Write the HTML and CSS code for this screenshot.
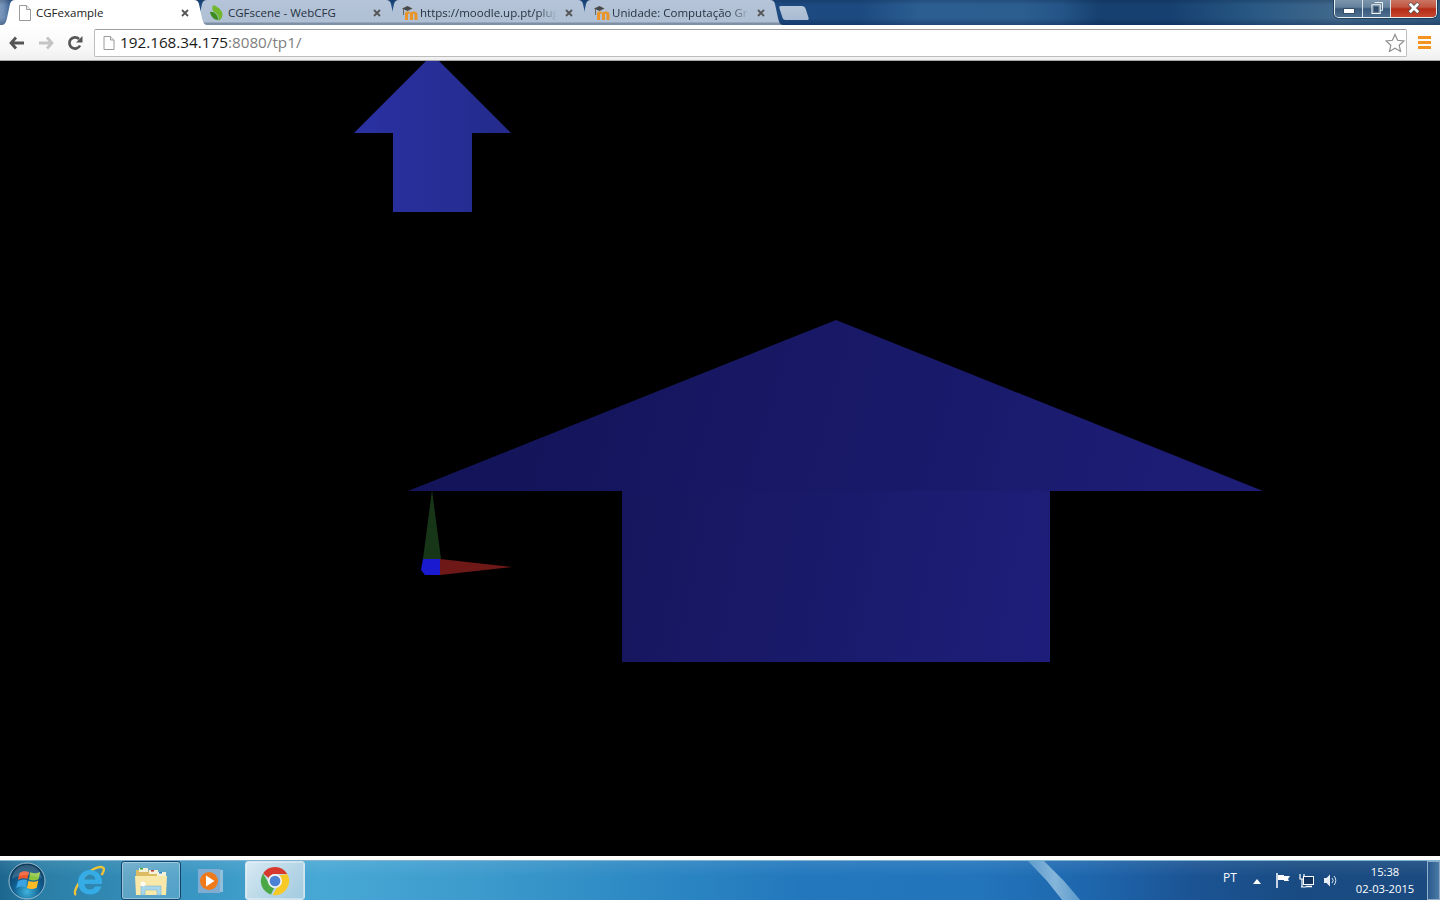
FILE: index.html
```html
<!DOCTYPE html>
<html lang="pt">
<head>
<meta charset="utf-8">
<title>CGFexample</title>
<link rel="stylesheet" href="styles.css">
</head>
<body>
<header class="chrome">
  <div class="tabstrip">
    <div class="tabs">
      <div class="tab active">
        <svg class="favicon" viewBox="0 0 14 16"><path d="M1.5.5h7l4 4v11h-11z" fill="#fff" stroke="#9a9a9a"/><path d="M8.5.5v4h4" fill="#eee" stroke="#9a9a9a"/></svg>
        <span class="tab-title">CGFexample</span>
        <svg class="tab-close" viewBox="0 0 8 8"><path d="M1 1l6 6M7 1L1 7" stroke="#555" stroke-width="1.8"/></svg>
      </div>
      <div class="tab">
        <svg class="favicon" viewBox="0 0 14 16"><path d="M3.500 0C9.500 2.500 13 6.500 12.500 10.500 12 13 10.500 15 8.500 16 9.500 12 7.500 9 3 6 1.800 4 2 2 3.500 0z" fill="#72b82e"/><path d="M0 7c3.500-1 7.500 2 8.500 8C4 15 .8 11.500 0 7z" fill="#3c8c20"/></svg>
        <span class="tab-title">CGFscene - WebCFG</span>
        <svg class="tab-close" viewBox="0 0 8 8"><path d="M1 1l6 6M7 1L1 7" stroke="#555" stroke-width="1.8"/></svg>
      </div>
      <div class="tab">
        <svg class="favicon moodle" viewBox="0 0 16 16"><use href="#moodle"/></svg>
        <span class="tab-title fade">https://moodle.up.pt/plug</span>
        <svg class="tab-close" viewBox="0 0 8 8"><path d="M1 1l6 6M7 1L1 7" stroke="#555" stroke-width="1.8"/></svg>
      </div>
      <div class="tab">
        <svg class="favicon moodle" viewBox="0 0 16 16"><use href="#moodle"/></svg>
        <span class="tab-title fade">Unidade: Computação Gr</span>
        <svg class="tab-close" viewBox="0 0 8 8"><path d="M1 1l6 6M7 1L1 7" stroke="#555" stroke-width="1.8"/></svg>
      </div>
      <div class="newtab"></div>
    </div>
    <div class="winctl">
      <div class="wbtn wmin"><span class="minbar"></span></div>
      <div class="wbtn wmax">
        <svg viewBox="0 0 13 13" class="maxicon"><path d="M4 .5h8.500V9H10" fill="none" stroke="#fff"/><rect x="1" y="3" width="9" height="9.500" fill="#5f7d99" stroke="#fff"/><rect x="3.500" y="5.500" width="4" height="4.500" fill="#35506c" stroke="#1e3650" stroke-width=".6"/></svg>
      </div>
      <div class="wbtn wclose">
        <svg viewBox="0 0 14 12" class="closeicon"><path d="M2.500 1.500l9 9M11.500 1.500l-9 9" stroke="#46505a" stroke-width="4.200"/><path d="M2.800 1.800l8.400 8.400M11.200 1.800l-8.400 8.400" stroke="#fff" stroke-width="2.800"/></svg>
      </div>
    </div>
  </div>
  <nav class="toolbar">
    <svg class="navicon back" viewBox="0 0 16 14"><path d="M7 1.500L2 7l5 5.500M2.500 7H15" fill="none" stroke="#555" stroke-width="2.800"/></svg>
    <svg class="navicon fwd" viewBox="0 0 16 14"><path d="M9 1.500L14 7l-5 5.500M13.500 7H1" fill="none" stroke="#c4c4c4" stroke-width="2.800"/></svg>
    <svg class="navicon reload" viewBox="0 0 16 16"><path d="M13 10.500A5.600 5.600 0 1 1 12 4" fill="none" stroke="#555" stroke-width="2.700"/><path d="M9 7.500h6.500V1z" fill="#555"/></svg>
    <div class="omnibox">
      <svg class="pageicon" viewBox="0 0 12 14"><path d="M1 .5h6.500l3.500 3.500v9.500H1z" fill="#fff" stroke="#9a9a9a"/><path d="M7.500.5V4H11" fill="#eee" stroke="#9a9a9a"/></svg>
      <span class="url"><span class="host">192.168.34.175</span>:8080/tp1/</span>
      <svg class="star" viewBox="0 0 20 20"><path d="M10 1.500l2.600 5.800 6.300.7-4.700 4.200 1.300 6.200L10 15.200 4.500 18.400l1.300-6.200L1.100 8l6.300-.7z" fill="#fff" stroke="#8e8e8e" stroke-width="1.200"/></svg>
    </div>
    <div class="menu"><span></span><span></span><span></span></div>
  </nav>
</header>

<main class="stage">
  <svg class="scene" viewBox="0 61 1440 795" preserveAspectRatio="none">
    <defs>
      <linearGradient id="arrowfill" x1="0" y1="0" x2="1" y2="0"><stop offset="0" stop-color="#2a31a2"/><stop offset="1" stop-color="#242b8c"/></linearGradient>
      <linearGradient id="roof" gradientUnits="userSpaceOnUse" x1="520" y1="340" x2="1180" y2="520"><stop offset="0" stop-color="#14145a"/><stop offset="1" stop-color="#1d1d76"/></linearGradient>
      <linearGradient id="body" gradientUnits="userSpaceOnUse" x1="622" y1="540" x2="1050" y2="620"><stop offset="0" stop-color="#16165e"/><stop offset="1" stop-color="#1e1e7a"/></linearGradient>
    </defs>
    <polygon fill="url(#arrowfill)" points="354,133 426,61 439,61 511,133 472,133 472,212 393,212 393,133"/>
    <polygon fill="url(#roof)" points="408,491 836,320 1263,491"/>
    <rect fill="url(#body)" x="622" y="491" width="428" height="171"/>
    <polygon fill="#173517" points="432,490 441,559 423,559"/>
    <polygon fill="#1a1ad0" points="423,559 440,559 440,575 425,575 421,570"/>
    <polygon fill="#6e1818" points="440,559 512,567 440,575"/>
  </svg>
</main>

<footer class="taskbar-wrap">
  <div class="taskbar">
    <svg class="orb" viewBox="0 0 38 38">
      <defs>
        <radialGradient id="orbfill" cx=".5" cy=".8" r=".75"><stop offset="0" stop-color="#3fb4dc"/><stop offset=".5" stop-color="#105f92"/><stop offset="1" stop-color="#0b3a5c"/></radialGradient>
      </defs>
      <circle cx="19" cy="19" r="18" fill="url(#orbfill)" stroke="#9dbbcc" stroke-width="1"/>
      <g transform="translate(3.500 -1)">
        <path d="M8 12c3-2 6-2.500 9.500-1l-1.600 7c-3-1.300-6-1-9.500.8z" fill="#f0562a"/>
        <path d="M18.800 11.200c3.500 1.500 6.500 1.500 10-.4l-1.700 7.400c-3.300 1.800-6.300 1.800-9.700.4z" fill="#8cc63f"/>
        <path d="M6.500 20c3.300-1.700 6.300-2 9.200-.8l-1.600 7c-3-1.300-6-1-9.400.7z" fill="#3aa3e3"/>
        <path d="M17 19.700c3.400 1.400 6.500 1.400 9.800-.3l-1.600 7.300c-3.400 1.700-6.500 1.700-9.800.3z" fill="#fbbb27"/>
      </g>
      <path d="M4 17C5 8 11 3 19 3s14 5 15 14c-5-3-10-4-15-4S9 14 4 17z" fill="#fff" opacity=".16"/>
    </svg>
    <div class="slot">
      <svg class="ie" viewBox="0 0 32 32">
        <path d="M3 30C-1 27 8 12 19 5c5-3 10-4 11.500-2 1 1.500 0 4-2 7" fill="none" stroke="#f0c238" stroke-width="2.400"/>
        <path d="M29 19H11.500c.3 3.500 2.500 5.500 5.500 5.500 2.500 0 4-1 5-3h6.500c-1.500 5-5.800 8-11.500 8-7 0-12-5-12-12S10 5 17 5s12 5 12 12zM11.500 14.500h11c-.3-3-2.500-5-5.500-5s-5.200 2-5.500 5z" fill="#35ace6" fill-rule="evenodd"/>
      </svg>
    </div>
    <div class="slot open">
      <svg class="folder" viewBox="0 0 34 30">
        <path d="M2 4h12l2 3h16v21H2z" fill="#dcbc62"/>
        <rect x="5" y="2" width="9" height="4" fill="#f4f0d8"/><rect x="6" y="2" width="3" height="1.500" fill="#3aa83a"/>
        <rect x="15" y="4" width="9" height="4" fill="#f4f0d8"/><rect x="17" y="4" width="3" height="1.500" fill="#c0392b"/>
        <rect x="23" y="6" width="9" height="4" fill="#f4f0d8"/><rect x="25" y="6" width="3" height="1.500" fill="#2a80c8"/>
        <path d="M1 10h32l-1 19H2z" fill="#f8e8aa"/>
        <path d="M7 29v-9h20v9h-4v-5H11v5z" fill="#a9d7ea" stroke="#7fb8d4" stroke-width=".6"/>
        <circle cx="9" cy="18" r="2.500" fill="#fff" opacity=".85"/>
      </svg>
    </div>
    <div class="slot">
      <svg class="media" viewBox="0 0 28 26">
        <rect x="6" y="2" width="20" height="22" fill="#b6cfe4" opacity=".7"/>
        <rect x="1" y="1" width="22" height="24" fill="#7facd0"/>
        <circle cx="12" cy="13" r="9" fill="#ee7a1c"/>
        <path d="M9 7.500l8.500 5.500L9 18.500z" fill="#fff"/>
      </svg>
    </div>
    <div class="slot open active-app">
      <svg class="chromelogo" viewBox="0 0 32 32">
        <path d="M16 1a15 15 0 0 1 13 7.500H16a7.500 7.500 0 0 0-6.800 4.300L3.300 7.900A15 15 0 0 1 16 1z" fill="#d8392e"/>
        <path d="M3.300 7.900l6.300 10.900A7.500 7.500 0 0 0 15 23.400L11.700 30.400A15 15 0 0 1 3.300 7.900z" fill="#4aa846"/>
        <path d="M29 8.500a15 15 0 0 1-15.500 22.300l6.200-10.900A7.500 7.500 0 0 0 20.500 10z" fill="#f6c925"/>
        <circle cx="16" cy="16" r="7.500" fill="#f2f2f2"/>
        <circle cx="16" cy="16" r="5.700" fill="#4c82d4"/>
      </svg>
    </div>
    <div class="tray">
      <span class="lang">PT</span>
      <svg class="t-up" viewBox="0 0 8 5"><path d="M4 0l4 5H0z" fill="#fff"/></svg>
      <svg class="t-flag" viewBox="0 0 14 15"><path d="M1 0v15" stroke="#fff" stroke-width="1.500"/><path d="M2 2h6v1h6l-2 3 1 2H8V7H2z" fill="#fff"/></svg>
      <svg class="t-net" viewBox="0 0 15 15"><path d="M1 1v5h4V1M3 6v8M2 14h5" fill="none" stroke="#fff" stroke-width="1.200"/><rect x="4.500" y="3.500" width="10" height="8" fill="#12345f" stroke="#fff"/><path d="M7 13.500h6" stroke="#fff" stroke-width="1.500"/></svg>
      <svg class="t-vol" viewBox="0 0 15 15"><path d="M1 5h2.500L7 1.500v12L3.500 10H1z" fill="#e8eef4"/><path d="M9 5a3.500 3.500 0 0 1 0 5M11 3a6.500 6.500 0 0 1 0 9" fill="none" stroke="#dfe8f0" stroke-width="1"/></svg>
      <div class="clock"><span>15:38</span><span>02-03-2015</span></div>
      <div class="showdesk"></div>
    </div>
    <div class="streak"></div>
  </div>
</footer>

<svg class="defs" width="0" height="0">
  <symbol id="moodle" viewBox="0 0 16 16">
    <path d="M3 13.500V7.500C5 6 7 6 8.500 7.500 10.500 6 15.500 5.500 15.500 9.500V15h-3V9.500c0-1.500-1.500-1.500-1.500 0V15H8V9.500C8 8 6 8 6 9.500V15H3z" fill="#e9952a"/>
    <path d="M0 3.500L5.500 1l5 2.500L5.500 6z" fill="#4a4a4a"/>
    <path d="M1.500 4v6" stroke="#666" stroke-width="1"/>
  </symbol>
</svg>
</body>
</html>
```
FILE: styles.css
```css
* { box-sizing: border-box; }
html, body { margin: 0; height: 100%; }
body {
  width: 1440px;
  height: 900px;
  overflow: hidden;
  display: flex;
  flex-direction: column;
  background: #000;
  font-family: "Open Sans", "Noto Sans", sans-serif;
}
.defs { display: block; height: 0; }

/* browser chrome */
.chrome { flex: none; height: 61px; display: flex; flex-direction: column; }
.tabstrip {
  position: relative;
  height: 25px;
  flex: none;
  display: flex;
  background:
    linear-gradient(180deg, rgba(10,30,60,.25) 0, rgba(10,30,60,0) 5px, rgba(10,30,70,0) 18px, rgba(8,30,70,.35) 25px),
    linear-gradient(90deg, #7c97bb 0, #6f8db3 4px, #1f4a80 14px, #1c4a80 860px, #2c5e92 920px, #2c5e90 1020px, #255588 1060px, #16406f 1100px, #164070 1170px, #2a5a85 1260px, #42688c 1340px, #2f5a80 1440px);
}
.tabs { display: flex; align-items: flex-start; padding-left: 2px; }
.tab {
  position: relative;
  width: 205px;
  height: 25px;
  margin-right: -13px;
  padding: 0 0 0 16px;
  display: flex;
  align-items: center;
  clip-path: path("M0 25C3 25 4 22 5 18L8 4C9 1 10 0 13 0L192 0C195 0 196 1 197 4L200 18C201 22 202 25 205 25Z");
  background: linear-gradient(180deg, #b5c4d8 0, #afbfd4 22px, #7e90a6 23px, #7e90a6 25px);
  font-size: 11.5px;
  color: #26323f;
}
.tab.active {
  z-index: 5;
  background: #fff;
  color: #222;
}
.favicon { width: 14px; height: 16px; flex: none; margin-right: 4px; }
.favicon.moodle { width: 16px; margin-right: 2px; }
.tab-title {
  width: 136px;
  flex: none;
  white-space: nowrap;
}
.tab-title.fade {
  -webkit-mask-image: linear-gradient(90deg, #000 118px, transparent 137px);
  mask-image: linear-gradient(90deg, #000 118px, transparent 137px);
}
.tab-close { width: 8px; height: 8px; flex: none; margin-left: 9px; margin-top: 1px; }
.newtab {
  width: 26px;
  height: 14px;
  margin: 6px 0 0 11px;
  border-radius: 2px 3px 2px 2px;
  transform: skewX(18deg);
  background: linear-gradient(180deg, #b6c6da, #a9bbd1);
}
.winctl {
  position: absolute;
  top: -1px;
  right: 3px;
  width: 103px;
  height: 19px;
  display: flex;
  border: 1px solid #e6edf3;
  border-top: 0;
  border-radius: 0 0 5px 5px;
  box-shadow: 0 0 0 1px rgba(20,40,60,.6);
  overflow: hidden;
}
.wbtn { display: flex; align-items: center; justify-content: center; height: 100%; }
.wmin, .wmax {
  width: 28px;
  border-right: 1px solid #d8e2ea;
  background: linear-gradient(180deg, #7f98ae 0, #64819c 45%, #3a5a7a 55%, #4d6f90 100%);
}
.wclose {
  flex: 1;
  background: linear-gradient(180deg, #cc7a6a 0, #c0553f 45%, #b52c16 55%, #c9472f 100%);
}
.minbar { width: 10px; height: 4px; margin-top: 6px; background: #fff; box-shadow: 0 0 0 1px rgba(40,60,80,.5); }
.maxicon { width: 12px; height: 12px; }
.closeicon { width: 14px; height: 12px; }

.toolbar {
  flex: 1;
  display: flex;
  align-items: center;
  padding: 0 0 0 9px;
  background: linear-gradient(180deg, #fff 0, #f7f7f7 70%, #efefef 100%);
  border-bottom: 1px solid #a8a8a8;
}
.navicon { flex: none; }
.back, .fwd { width: 16px; height: 14px; }
.fwd { margin-left: 13px; }
.reload { width: 16px; height: 16px; margin-left: 13px; }
.omnibox {
  flex: none;
  width: 1313px;
  height: 28px;
  margin-left: 11px;
  display: flex;
  align-items: center;
  padding: 0 1px 0 8px;
  background: #fff;
  border: 1px solid #bdbdbd;
  border-top-color: #9e9e9e;
  border-radius: 2px;
}
.pageicon { width: 12px; height: 14px; flex: none; }
.url { margin: -2px 0 0 5px; font-size: 15.25px; color: #808080; white-space: nowrap; }
.host { color: #1a1a1a; }
.star { width: 20px; height: 20px; flex: none; margin-left: auto; }
.menu { flex: none; width: 13px; margin-left: 11px; display: flex; flex-direction: column; gap: 2px; }
.menu span { display: block; height: 3px; background: #f4921f; }

/* the page */
.stage { flex: none; height: 795px; background: #000; }
.scene { display: block; width: 1440px; height: 795px; }

/* taskbar */
.taskbar-wrap { flex: none; height: 44px; padding-top: 4px; background: #fff; }
.taskbar {
  position: relative;
  height: 40px;
  display: flex;
  align-items: center;
  overflow: hidden;
  border-top: 1px solid #7fb4d4;
  background:
    linear-gradient(180deg, rgba(255,255,255,.08) 0, rgba(255,255,255,0) 40%),
    linear-gradient(90deg, #1c668f 0, #2a7ea6 40px, #3a97c3 200px, #48a8d5 320px, #3d9acc 480px, #2f8bc4 620px, #2378bd 800px, #2274bb 980px, #1e66ad 1090px, #1b5494 1190px, #194b82 1300px, #1b4a80 1440px);
}
.streak {
  position: absolute;
  left: 1028px;
  top: 0;
  width: 54px;
  height: 40px;
  clip-path: polygon(0 0, 16px 0, 36px 50%, 53px 100%, 35px 100%, 19px 50%);
  background: linear-gradient(90deg, #6fa8d4, #a8cfe8 50%, #6fa8d4);
  opacity: .75;
  filter: blur(.5px);
}
.orb { width: 38px; height: 38px; flex: none; margin: 0 13px 0 8px; }
.slot {
  flex: none;
  width: 60px;
  height: 39px;
  margin-right: 2px;
  display: flex;
  align-items: center;
  justify-content: center;
  border: 1px solid transparent;
  border-radius: 3px;
}
.slot.open {
  border-color: #12466e;
  box-shadow: inset 0 0 0 1px rgba(255,255,255,.35);
  background: linear-gradient(135deg, rgba(255,255,255,.28), rgba(255,255,255,.12));
}
.slot.active-app {
  border-color: #cfe4f0;
  background: linear-gradient(135deg, #d8eaf3 0, #b5d5e6 60%, #a3cbe0 100%);
}
.ie { width: 32px; height: 32px; }
.folder { width: 34px; height: 30px; }
.media { width: 28px; height: 26px; margin-left: -4px; }
.chromelogo { width: 30px; height: 30px; }
.tray {
  position: relative;
  z-index: 2;
  margin-left: auto;
  height: 100%;
  display: flex;
  align-items: center;
  color: #fff;
}
.lang { font-size: 12px; width: 14px; margin-top: -5px; line-height: 14px; }
.t-up { width: 8px; height: 5px; margin-left: 16px; margin-top: 2px; }
.t-flag { width: 14px; height: 15px; margin-left: 15px; }
.t-net { width: 15px; height: 15px; margin-left: 9px; }
.t-vol { width: 15px; height: 15px; margin-left: 9px; }
.clock {
  width: 84px;
  margin-left: 5px;
  display: flex;
  flex-direction: column;
  align-items: center;
  gap: 1px;
  font-size: 11.2px;
  line-height: 16px;
}
.showdesk {
  width: 13px;
  height: 100%;
  border: 1px solid rgba(180,200,220,.7);
  background: linear-gradient(90deg, #2a5a8c, #4a7aa5);
}
```
